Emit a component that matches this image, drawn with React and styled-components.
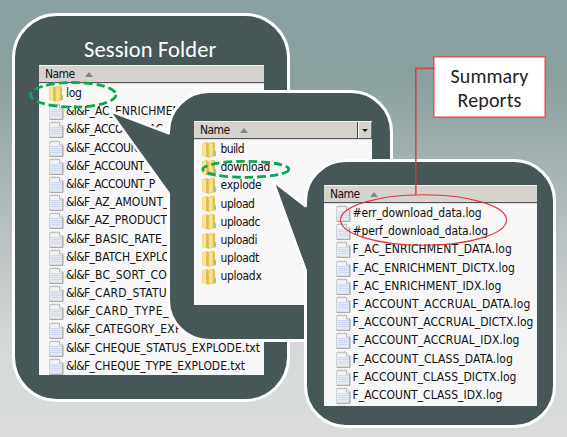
import React, { useLayoutEffect, useRef } from "react";
import styled, { createGlobalStyle } from "styled-components";

const DARK = "#475757";

const GlobalStyle = createGlobalStyle`
  * { box-sizing: border-box; }
  body { margin: 0; overflow: hidden; }
`;

const Slide = styled.main`
  position: relative;
  width: 567px;
  height: 437px;
  overflow: hidden;
  background: linear-gradient(180deg, #8ba1a2 0, #8aa09f 78px, #a5b2b2 165px, #c7cbcc 285px, #d5d9d9 350px, #d9dcdb 437px);
`;

const Callout = styled.section`
  position: absolute;
  left: ${(p) => p.$x}px;
  top: ${(p) => p.$y}px;
  width: ${(p) => p.$w}px;
  height: ${(p) => p.$h}px;
  padding: ${(p) => p.$pad};
  display: flex;
  flex-direction: column;
  border: 3px solid #fff;
  border-radius: ${(p) => p.$radius}px;
  background: ${DARK};
`;

const Title = styled.h1`
  margin: 0;
  height: 49px;
  padding: 22px 0 0 45px;
  color: #fff;
  font: 400 22.5px/24px Carlito, "Open Sans", sans-serif;
  white-space: nowrap;
`;

const FileList = styled.div`
  flex: none;
  height: ${(p) => p.$h}px;
  overflow: hidden;
  background: #f7f7f7;
  color: #111;
  font: 12px/18.2px "DejaVu Sans Condensed", "DejaVu Sans", sans-serif;
  font-stretch: condensed;
`;

const ListHeader = styled.div`
  display: flex;
  align-items: center;
  height: 18px;
  padding-left: 6px;
  background: #d6d3ce;
  border-top: 1px solid #f4f3f0;
  border-bottom: 1px solid #55555a;
`;

const SortArrow = styled.i`
  margin-left: 10px;
  border: 4px solid transparent;
  border-top: 0;
  border-bottom: 5px solid #86868a;
`;

const ColumnMenu = styled.span`
  display: flex;
  align-items: center;
  justify-content: center;
  width: 15px;
  height: 16px;
  margin-left: auto;
  border-left: 1px solid #44444a;
  border-right: 1px solid #77777a;
  box-shadow: inset 1px 0 #fff;
`;

const MenuArrow = styled.i`
  border: 3px solid transparent;
  border-bottom: 0;
  border-top-color: #111;
`;

const Rows = styled.div`
  padding: ${(p) => p.$pad};
  border-top: 1px solid #dddddc;
`;

const Row = styled.div`
  display: flex;
  align-items: center;
  gap: ${(p) => p.$gap}px;
  height: 18.2px;
  white-space: nowrap;
`;

const Glyph = styled.svg`
  flex: none;
  display: block;
`;

const Label = styled.span`
  display: block;
`;

const Overlay = styled.svg`
  position: absolute;
  left: 0;
  top: 0;
  pointer-events: none;
`;

const Note = styled.div`
  position: absolute;
  left: 433px;
  top: 56px;
  width: 113px;
  height: 62px;
  display: flex;
  flex-direction: column;
  align-items: center;
  justify-content: center;
  padding-top: 2px;
  border: 1px solid #c65f60;
  outline: 1px solid #ff9c9c;
  outline-offset: -2px;
  background: #fff;
  color: #222;
  font: 20px/24px Carlito, "Open Sans", sans-serif;
`;

// Spreads the text so that it spans exactly the given width.
function Fit({ width, text, rest = "" }) {
  const outer = useRef(null);
  const inner = useRef(null);
  useLayoutEffect(() => {
    outer.current.style.letterSpacing = "0px";
    const natural = inner.current.getBoundingClientRect().width;
    outer.current.style.letterSpacing = `${(width - natural) / text.length}px`;
  }, [width, text]);
  return (
    <span ref={outer}>
      <span ref={inner}>{text}</span>
      {rest}
    </span>
  );
}

function FileIcon() {
  return (
    <Glyph width="15" height="18" viewBox="0 0 15 18">
      <path d="M.7 2.5H11L14 6v11.3H.7z" fill="#f3f3f5" stroke="#c2c1c4" strokeWidth=".9" />
      <path d="M13.8 6v11.3H.8" fill="none" stroke="#a3a3a6" strokeWidth="1" />
      <path d="M2 8h11v8H2z" fill="#e3e9f5" />
      <path d="M2 7.5h11M2 9.5h11M2 11.5h11M2 13.5h11" stroke="#cbd7ed" strokeWidth=".9" />
      <path d="M10.5 2.5V6H14" fill="#fff" stroke="#b0b0b3" strokeWidth=".9" />
      <path d="M2.5 3.4 3.5 1.2M5.2 3.4 6.2 1.2M7.9 3.4 8.9 1.2" stroke="#bababc" strokeWidth=".9" />
    </Glyph>
  );
}

function FolderIcon() {
  return (
    <Glyph width="15" height="17" viewBox="0 0 15 17">
      <path d="M0 2.4 4.5 1 6.5 2 11.5.8 13 2.2v7.3l1 1V15L6.5 16.8 0 14.6z" fill="#e6c75e" />
      <path d="M.3 2.6 4.4 1.4v14L.3 14.2z" fill="#f5e595" />
      <path d="M4.4 1.4 6.4 2.4v14l-2-.9z" fill="#dcb94f" />
      <path d="M6.8 2.6l4.4-1.1v13.7l-4.4 1.2z" fill="#f3da72" />
      <path d="M8.6 3v12" stroke="#f9eaa0" strokeWidth="1.2" />
      <path d="M11.2 1.5 12.9 2.6v7l1.1 1V15l-2.8.5z" fill="#dfbf55" />
      <path d="M12.9 11v3.4" stroke="#86c4c4" strokeWidth="1.3" />
    </Glyph>
  );
}

function Header({ menu }) {
  return (
    <ListHeader>
      <Label><Fit text="Name" width={29.5} /></Label>
      <SortArrow />
      {menu && <ColumnMenu><MenuArrow /></ColumnMenu>}
    </ListHeader>
  );
}

const sessionFiles = [
  ["_AC_ENRICHME", 83, "N"],
  ["_ACCOUNT", 54.5, "_AC"],
  ["_ACCOUNT", 54.5, "_"],
  ["_ACCOUNT", 54.5, "_"],
  ["_ACCOUNT", 54.5, "_P"],
  ["_AZ_AMOUNT", 73.5, "_"],
  ["_AZ_PRODUCT", 77.5],
  ["_BASIC_RATE", 72.5, "_"],
  ["_BATCH_EXPL", 72, "O"],
  ["_BC_SORT_CO", 77.5],
  ["_CARD_STATU", 77.5],
  ["_CARD_TYPE", 73.5, "_E"],
  ["_CATEGORY_EX", 85.5, "P"],
  ["_CHEQUE_STATUS_EXPLODE.txt", 170.5],
  ["_CHEQUE_TYPE_EXPLODE.txt", 155.5],
];

const folders = [
  ["build", 23.5], ["download", 49.5], ["explode", 41], ["upload", 34],
  ["uploadc", 39.5], ["uploadi", 36.5], ["uploadt", 38.5], ["uploadx", 41],
];

const logs = [
  ["#err_download_data.log", 129], ["#perf_download_data.log", 135.5],
  ["F_AC_ENRICHMENT_DATA.log", 159.5], ["F_AC_ENRICHMENT_DICTX.log", 162.5],
  ["F_AC_ENRICHMENT_IDX.log", 149], ["F_ACCOUNT_ACCRUAL_DATA.log", 178],
  ["F_ACCOUNT_ACCRUAL_DICTX.log", 181], ["F_ACCOUNT_ACCRUAL_IDX.log", 167],
  ["F_ACCOUNT_CLASS_DATA.log", 160.5], ["F_ACCOUNT_CLASS_DICTX.log", 164],
  ["F_ACCOUNT_CLASS_IDX.log", 150],
];

export default function App() {
  return (
    <>
      <GlobalStyle />
      <Slide>
        <Callout $x={12} $y={13} $w={278} $h={389} $radius={45} $pad="0 23px 0 24px">
          <Title><Fit text="Session Folder" width={132.5} /></Title>
          <FileList $h={310}>
            <Header />
            <Rows $pad="0 0 0 10px">
              <Row $gap={2}><FolderIcon /><Label><Fit text="log" width={15.5} /></Label></Row>
              {sessionFiles.map(([text, width, rest], i) => (
                <Row key={i} $gap={2}>
                  <FileIcon />
                  <Label><Fit text="&l&F" width={23.5} /><Fit text={text} width={width} rest={rest} /></Label>
                </Row>
              ))}
            </Rows>
          </FileList>
        </Callout>

        <Callout $x={167} $y={90} $w={226} $h={252} $radius={42} $pad="28px 18px 0 24px">
          <FileList $h={184}>
            <Header menu />
            <Rows $pad="0 0 0 8px">
              {folders.map(([text, width]) => (
                <Row key={text} $gap={3.5}><FolderIcon /><Label><Fit text={text} width={width} /></Label></Row>
              ))}
            </Rows>
          </FileList>
        </Callout>

        <Overlay width="567" height="437">
          <path d="M171 134.5 109 110.5 171 195z" fill={DARK} />
          <path d="M169.5 133.5 109 110.5 168.7 193.5" fill="none" stroke="#fff" strokeWidth="2.6" strokeLinejoin="round" />
        </Overlay>

        <Callout $x={304} $y={159} $w={252} $h={269} $radius={42} $pad="23px 16px 0 17px">
          <FileList $h={221}>
            <Header />
            <Rows $pad="0 0 0 12px">
              {logs.map(([text, width]) => (
                <Row key={text} $gap={1.5}><FileIcon /><Label><Fit text={text} width={width} /></Label></Row>
              ))}
              <Row $gap={0}><FileIcon /></Row>
            </Rows>
          </FileList>
        </Callout>

        <Note>
          <Fit text="Summary" width={78} />
          <Fit text="Reports" width={64} />
        </Note>

        <Overlay width="567" height="437">
          <path d="M308 208 273 181 308 273z" fill={DARK} />
          <path d="M306 206.5 273 181 305.7 271" fill="none" stroke="#fff" strokeWidth="2.6" strokeLinejoin="round" />
          <ellipse cx="73.3" cy="94.8" rx="42.7" ry="12.3" fill="none" stroke="#0aa84f" strokeWidth="2.8" strokeDasharray="8.5 4" />
          <ellipse cx="245.8" cy="169.3" rx="43" ry="8" fill="none" stroke="#0aa84f" strokeWidth="2.8" strokeDasharray="8.5 4" />
          <ellipse cx="423.5" cy="220" rx="83" ry="25.3" fill="none" stroke="#e0343a" strokeWidth="1.1" />
          <path d="M434.5 68.3H415.8V194.5" fill="none" stroke="#d23a3d" strokeOpacity=".82" strokeWidth="1.7" />
        </Overlay>
      </Slide>
    </>
  );
}
